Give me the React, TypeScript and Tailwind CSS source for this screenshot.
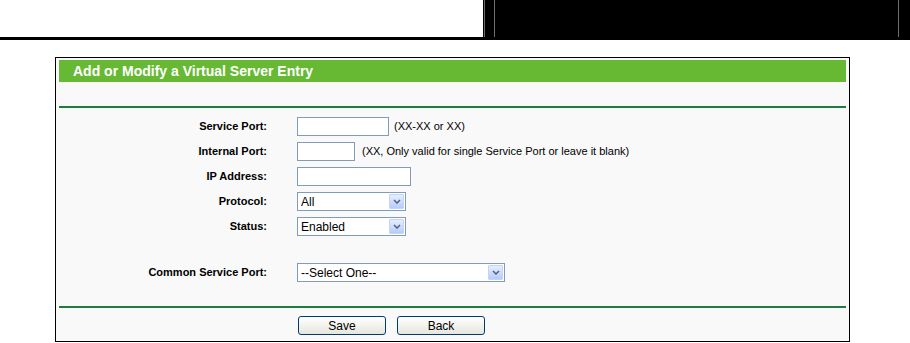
import React from "react";

const font = { fontFamily: '"Liberation Sans", Arial, sans-serif' };

function Chevron() {
  return (
    <svg width="8" height="5" viewBox="0 0 8 5">
      <path d="M1 1 L4 4 L7 1" fill="none" stroke="#4d6185" strokeWidth="1.5" />
    </svg>
  );
}

function Select({ value, w }: { value: string; w: string }) {
  return (
    <div className={`flex h-[19px] items-stretch border border-[#7f9db9] bg-white ${w}`}>
      <div className="flex flex-1 items-center pl-[3px] text-[12px] leading-none text-black">{value}</div>
      <div className="m-[1px] flex w-[15px] items-center justify-center rounded-[1px] border border-[#c3d3fd] bg-linear-to-b from-[#e6eefe] to-[#b7cbf7]">
        <Chevron />
      </div>
    </div>
  );
}

function Input({ w }: { w: string }) {
  return <div className={`h-[19px] border border-[#7f9db9] bg-white ${w}`} />;
}

function Row({ label, children }: { label: string; children: React.ReactNode }) {
  return (
    <div className="flex h-[25px] items-center">
      <div className="w-[211px] text-right text-[11px] font-bold text-black">{label}</div>
      <div className="ml-[30px] flex items-center gap-[5px]">{children}</div>
    </div>
  );
}

function Btn({ label }: { label: string }) {
  return (
    <div className="flex h-[19px] w-[88px] items-center justify-center rounded-[3px] border border-[#003c74] bg-linear-to-b from-white to-[#e6e6de] text-[12px] leading-none text-black">
      {label}
    </div>
  );
}

export default function App() {
  return (
    <div className="h-[343px] w-[910px] overflow-hidden bg-white" style={font}>
      {/* top bar */}
      <div className="flex h-[37px]">
        <div className="w-[483px] bg-white" />
        <div className="flex flex-1 bg-black">
          <div className="w-[1px]" />
          <div className="w-[1px] bg-[#6e6e6e]" />
          <div className="w-[9px]" />
          <div className="w-[1px] bg-[#6e6e6e]" />
          <div className="flex-1" />
          <div className="w-[1px] bg-[#6e6e6e]" />
          <div className="w-[11px]" />
        </div>
      </div>
      <div className="h-[3px] bg-black" />

      {/* panel */}
      <div className="ml-[55px] mt-[17px] h-[285px] w-[795px] border border-black bg-[#f9f9f9]">
        <div className="mx-[3px] mt-[2px] flex h-[22px] items-center bg-[#67b934] pl-[14px] text-[14px] font-bold text-white">
          Add or Modify a Virtual Server Entry
        </div>
        <div className="h-[24px]" />
        <div className="mx-[3px] h-[2px] bg-[#1d7d3e]" />
        <div className="h-[6px]" />
        <Row label="Service Port:">
          <Input w="w-[92px]" />
          <span className="text-[11px] text-black">(XX-XX or XX)</span>
        </Row>
        <Row label="Internal Port:">
          <Input w="w-[58px]" />
          <span className="ml-[2px] text-[11px] text-black">(XX, Only valid for single Service Port or leave it blank)</span>
        </Row>
        <Row label="IP Address:">
          <Input w="w-[114px]" />
        </Row>
        <Row label="Protocol:">
          <Select value="All" w="w-[109px]" />
        </Row>
        <Row label="Status:">
          <Select value="Enabled" w="w-[109px]" />
        </Row>
        <div className="h-[21px]" />
        <Row label="Common Service Port:">
          <Select value="--Select One--" w="w-[208px]" />
        </Row>
        <div className="h-[21px]" />
        <div className="mx-[3px] h-[2px] bg-[#1d7d3e]" />
        <div className="ml-[242px] mt-[8px] flex gap-[11px]">
          <Btn label="Save" />
          <Btn label="Back" />
        </div>
      </div>
    </div>
  );
}
